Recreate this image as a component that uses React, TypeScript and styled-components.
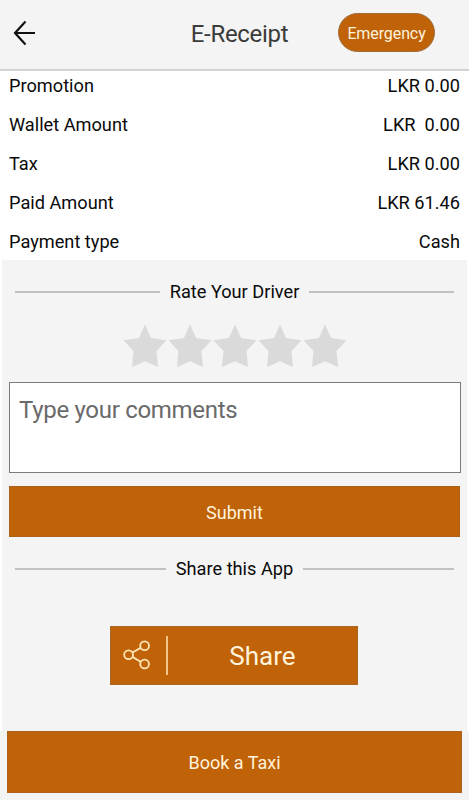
import React from 'react';
import styled, { createGlobalStyle } from 'styled-components';

const orange = '#bf6208';

const GlobalStyle = createGlobalStyle`
  * { box-sizing: border-box; }
  body { margin: 0; background: #fff; font-family: Roboto, "Liberation Sans", sans-serif; }
  button { font-family: inherit; margin: 0; cursor: pointer; }
`;

const Screen = styled.div`
  width: 469px;
  height: 800px;
  display: flex;
  flex-direction: column;
  overflow: hidden;
`;

const Header = styled.header`
  height: 71px;
  flex: none;
  display: grid;
  grid-template-columns: 146px 187px 1fr;
  align-items: center;
  padding: 0 0 5px;
  background: #f4f4f4;
  border-bottom: 2px solid #d3d3d3;
`;

const BackButton = styled.button`
  width: 40px;
  height: 40px;
  margin: 1px 0 0 4px;
  padding: 0;
  border: 0;
  background: none;
  display: block;
`;

const Title = styled.h1`
  margin: 3px 0 0;
  text-align: center;
  font-size: 24px;
  line-height: 28px;
  font-weight: 400;
  letter-spacing: -0.3px;
  color: #3b3b3b;
`;

const EmergencyButton = styled.button`
  width: 97px;
  height: 39px;
  margin-left: 5px;
  padding: 3px 0 0;
  border: 1px solid #a06c3c;
  border-radius: 20px;
  background: ${orange};
  color: #fff3dc;
  font-size: 16px;
  line-height: 20px;
  letter-spacing: -0.1px;
`;

const Details = styled.dl`
  flex: none;
  height: 189px;
  margin: 0;
  padding: 0 9px;
  display: grid;
  grid-template-rows: 34px repeat(4, 39px);
`;

const DetailRow = styled.div`
  display: flex;
  justify-content: space-between;
  align-items: flex-end;
  padding-bottom: 8px;
  font-size: 18.2px;
  line-height: 22px;
  color: #0a0a0a;
  dt, dd { margin: 0; white-space: pre; }
`;

const Panel = styled.main`
  flex: none;
  height: 471px;
  margin: 0 2px;
  padding: 0 7px;
  background: #f4f4f4;
  display: flex;
  flex-direction: column;
`;

const SectionHeading = styled.div`
  height: 64px;
  flex: none;
  padding: 0 6px;
  display: flex;
  align-items: center;
  gap: 10px;
  &::before, &::after {
    content: '';
    flex: 1;
    height: 2px;
    background: #c1c1c1;
  }
  h2 {
    margin: 0;
    font-size: 18.2px;
    line-height: 22px;
    font-weight: 400;
    color: #0a0a0a;
  }
`;

const Stars = styled.div`
  height: 58px;
  flex: none;
  display: flex;
  justify-content: center;
  gap: 1px;
`;

const CommentBox = styled.textarea`
  width: 452px;
  height: 91px;
  flex: none;
  display: block;
  margin: 0 0 13px;
  padding: 13px 9px;
  border: 1px solid #7c7c7c;
  border-radius: 0;
  background: #fff;
  resize: none;
  font: 400 24px/28px Roboto, "Liberation Sans", sans-serif;
  letter-spacing: -0.3px;
  &::placeholder { color: #6a6a6a; opacity: 1; }
`;

const ActionButton = styled.button<{ $height: number }>`
  width: 100%;
  height: ${({ $height }) => $height}px;
  flex: none;
  padding: 2px 0 0;
  border: 1px solid #aa611c;
  background: ${orange};
  color: #fff3dc;
  font-size: 18px;
  line-height: 22px;
`;

const ShareButton = styled.button`
  align-self: center;
  width: 248px;
  height: 59px;
  margin: 25px 1px 0 0;
  padding: 0;
  border: 1px solid #aa6627;
  background: ${orange};
  color: #fff3dc;
  display: flex;
  align-items: center;
  font-size: 26px;
  svg { margin-left: 12px; }
`;

const Divider = styled.span`
  width: 2px;
  height: 39px;
  margin: 0 0 1px 13px;
  background: #f0c487;
`;

const ShareLabel = styled.span`
  flex: 1;
  text-align: center;
  padding-top: 1px;
`;

const Footer = styled.footer`
  flex: 1;
  padding: 0 7px;
  background: #f4f4f4;
`;

const details = [
  ['Promotion', 'LKR 0.00'],
  ['Wallet Amount', 'LKR  0.00'],
  ['Tax', 'LKR 0.00'],
  ['Paid Amount', 'LKR 61.46'],
  ['Payment type', 'Cash'],
];

const BackArrow = () => (
  <svg width="40" height="40" viewBox="0 0 40 40" fill="none" stroke="#111" strokeWidth="2.2">
    <path d="M31 20H11M21.5 8.5 11 20l10.5 11.5" />
  </svg>
);

const Star = () => (
  <svg width="44" height="44" viewBox="0 0 44 44" fill="#dadada">
    <path d="M22 .5 28 14 43.5 16.3 33.5 27 35 43 22 37.3 9 43 10.5 27 .5 16.3 16 14Z" />
  </svg>
);

const ShareIcon = () => (
  <svg width="30" height="32" viewBox="0 0 30 32" fill="none" stroke="#ffe5b6" strokeWidth="1.8">
    <circle cx="5.6" cy="14.7" r="4.4" />
    <circle cx="21.6" cy="5.8" r="4.4" />
    <circle cx="21.6" cy="24" r="4.4" />
    <path d="m9.4 12.5 8.3-4.6M9.4 16.9l8.3 4.8" />
  </svg>
);

export default function App() {
  return (
    <Screen>
      <GlobalStyle />
      <Header>
        <BackButton aria-label="Back"><BackArrow /></BackButton>
        <Title>E-Receipt</Title>
        <EmergencyButton>Emergency</EmergencyButton>
      </Header>
      <Details>
        {details.map(([label, value]) => (
          <DetailRow key={label}>
            <dt>{label}</dt>
            <dd>{value}</dd>
          </DetailRow>
        ))}
      </Details>
      <Panel>
        <SectionHeading><h2>Rate Your Driver</h2></SectionHeading>
        <Stars>
          {[1, 2, 3, 4, 5].map((n) => <Star key={n} />)}
        </Stars>
        <CommentBox placeholder="Type your comments" />
        <ActionButton $height={51}>Submit</ActionButton>
        <SectionHeading><h2>Share this App</h2></SectionHeading>
        <ShareButton>
          <ShareIcon />
          <Divider />
          <ShareLabel>Share</ShareLabel>
        </ShareButton>
      </Panel>
      <Footer>
        <ActionButton $height={62}>Book a Taxi</ActionButton>
      </Footer>
    </Screen>
  );
}
